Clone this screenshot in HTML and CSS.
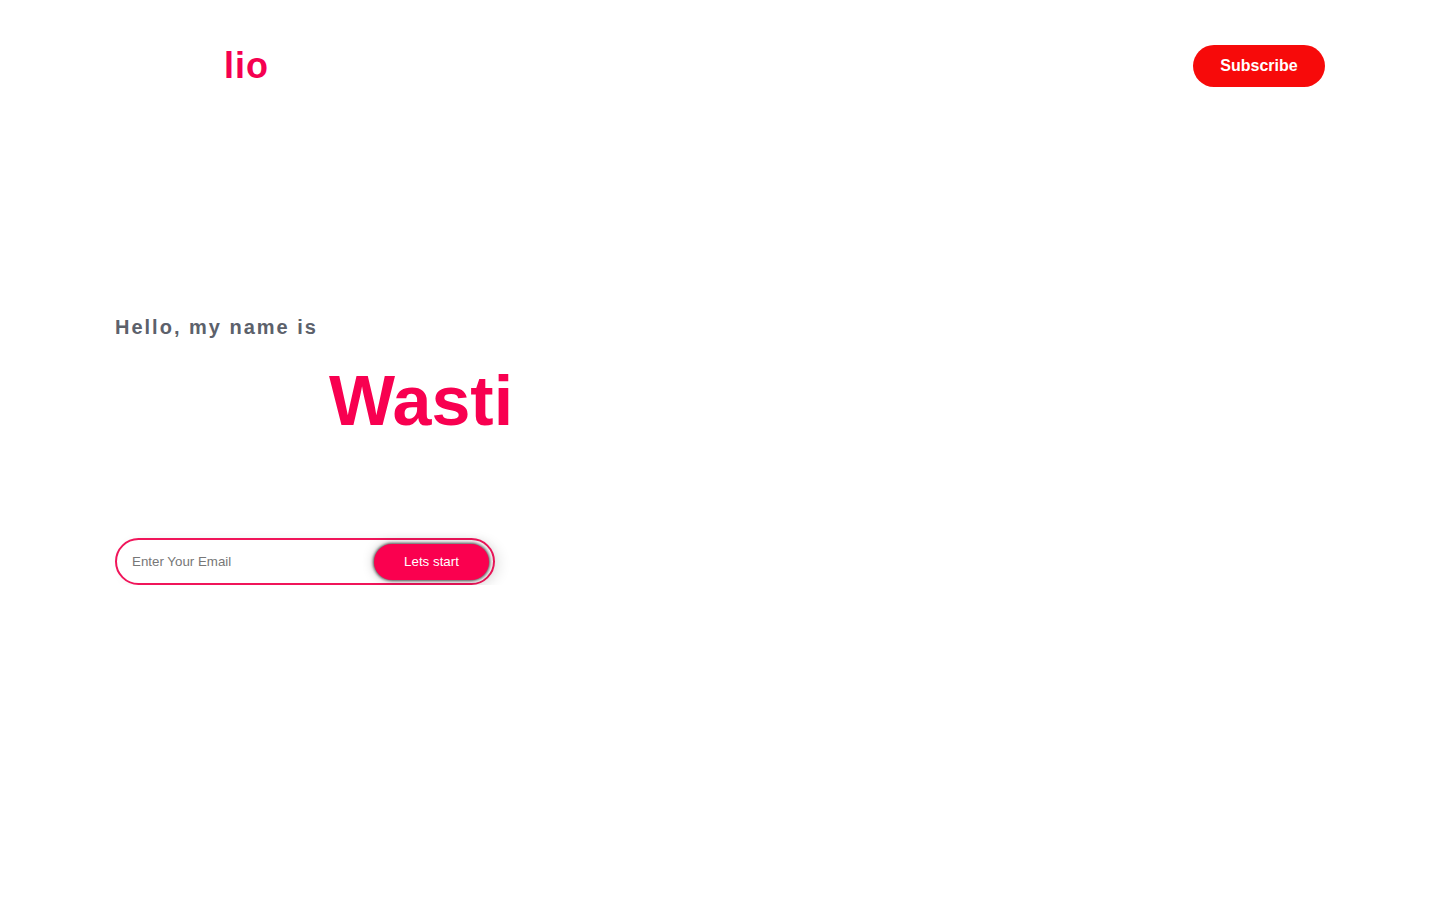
FILE: index.html
```html
<!DOCTYPE html>
<html lang="en">
<head>
<meta charset="utf-8">
<title>Portfolio</title>
<link rel="stylesheet" href="styles.css">
</head>
<body>
<header class="topbar">
  <div class="logo">lio</div>
  <button class="subscribe" type="button">Subscribe</button>
</header>
<main class="hero">
  <p class="greeting">Hello, my name is</p>
  <h1 class="name">Wasti</h1>
  <form class="signup">
    <input class="email" type="email" placeholder="Enter Your Email">
    <button class="start" type="button">Lets start</button>
  </form>
</main>
</body>
</html>
```
FILE: styles.css
```css
html, body {
  margin: 0;
  padding: 0;
  background: #ffffff;
  font-family: "Liberation Sans", Arial, sans-serif;
}

.topbar {
  display: flex;
  align-items: center;
  justify-content: space-between;
  padding: 45px 115px 0 115px;
}

.logo {
  padding-left: 109px;
  font-size: 36px;
  font-weight: 700;
  letter-spacing: 1px;
  color: #f50050;
  line-height: 42px;
}

.subscribe {
  height: 42px;
  width: 132px;
  border: none;
  border-radius: 21px;
  background: #f70a0a;
  color: #ffffff;
  font-family: "Liberation Sans", Arial, sans-serif;
  font-size: 16px;
  font-weight: 700;
  padding: 0;
  cursor: pointer;
}

.hero {
  padding: 229px 115px 0 115px;
}

.greeting {
  margin: 0;
  font-size: 20px;
  line-height: 23px;
  font-weight: 700;
  letter-spacing: 2px;
  color: #5c616b;
}

.name {
  margin: 22px 0 0 0;
  padding-left: 214px;
  font-size: 70px;
  line-height: 80px;
  font-weight: 700;
  color: #f80050;
}

.signup {
  margin-top: 97px;
  width: 380px;
  box-sizing: border-box;
  height: 47px;
  display: flex;
  align-items: center;
  border: 2px solid #f0155a;
  border-radius: 24px;
  padding: 0 4px 0 15px;
  box-shadow: 6px 2px 12px rgba(0, 0, 0, 0.08);
}

.email {
  flex: 1;
  min-width: 0;
  border: none;
  outline: none;
  background: transparent;
  font-family: "Liberation Sans", Arial, sans-serif;
  font-size: 13.33px;
  color: #333333;
  padding: 0;
}

.email::placeholder {
  color: #777777;
}

.start {
  width: 115px;
  height: 36px;
  border: none;
  border-radius: 18px;
  background: #fa004f;
  color: #ffffff;
  font-family: "Liberation Sans", Arial, sans-serif;
  font-size: 13.33px;
  padding: 0;
  box-shadow: 0 0 3px 1px rgba(60, 60, 60, 0.85), 0 0 12px rgba(0, 0, 0, 0.25);
  cursor: pointer;
}
```
